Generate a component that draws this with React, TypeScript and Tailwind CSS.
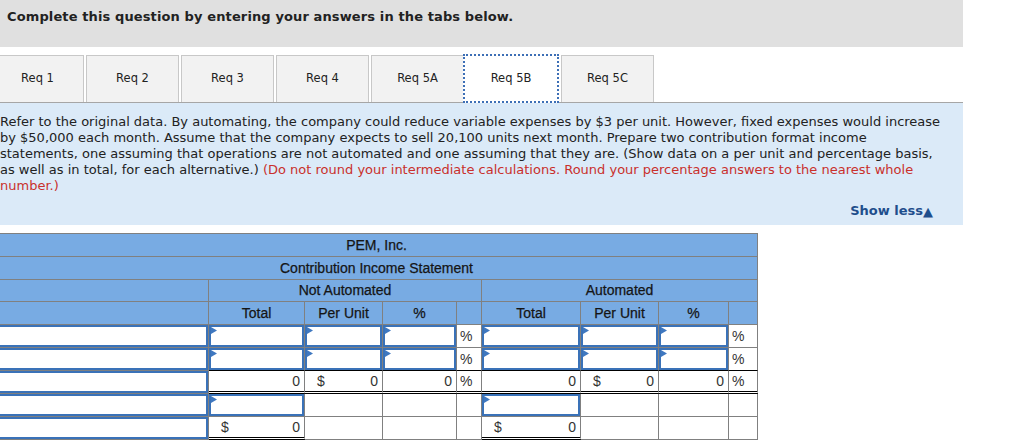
import React from 'react';

type Cell =
  | { t: 'label' }
  | { t: 'inp' }
  | { t: 'num'; v: string; dbl?: boolean }
  | { t: 'dollar'; v: string; dbl?: boolean }
  | { t: 'pct'; dbl?: boolean }
  | { t: 'empty' };

const W = ['w-[213px]', 'w-[96px]', 'w-[78px]', 'w-[74px]', 'w-[25px]', 'w-[99px]', 'w-[78px]', 'w-[70px]', 'w-[29px]'];

const Tri = () => (
  <svg width="6" height="7" viewBox="0 0 6 7" className="block">
    <polygon points="0,0 6,3.5 0,7" fill="#3f78c0" />
  </svg>
);

function renderCell(c: Cell, i: number, blackBottom: boolean) {
  const base = `${W[i]} h-full shrink-0 box-border border-r border-[#808080] ${
    'dbl' in c && c.dbl ? 'border-b-[3px] border-b-black border-double' : blackBottom && i > 0 ? 'border-b border-b-black' : 'border-b'
  }`;
  if (c.t === 'label') {
    return (
      <div key={i} className={base}>
        <div className="h-full box-border border-2 border-[#3a72b8] bg-white" />
      </div>
    );
  }
  if (c.t === 'inp') {
    return (
      <div key={i} className={base}>
        <div className="h-full box-border border-2 border-[#3a72b8] bg-white">
          <Tri />
        </div>
      </div>
    );
  }
  if (c.t === 'num') {
    return (
      <div key={i} className={`${base} flex items-center justify-end pr-[4px] text-[#333]`}>
        {c.v}
      </div>
    );
  }
  if (c.t === 'dollar') {
    return (
      <div key={i} className={`${base} flex items-center justify-between pl-[12px] pr-[4px] text-[#333]`}>
        <span>$</span>
        <span>{c.v}</span>
      </div>
    );
  }
  if (c.t === 'pct') {
    return (
      <div key={i} className={`${base} flex items-center pl-[3px] text-[#333]`}>
        %
      </div>
    );
  }
  return <div key={i} className={base} />;
}

const rowA: Cell[] = [
  { t: 'label' }, { t: 'inp' }, { t: 'inp' }, { t: 'inp' }, { t: 'pct' },
  { t: 'inp' }, { t: 'inp' }, { t: 'inp' }, { t: 'pct' },
];
const rowC: Cell[] = [
  { t: 'label' },
  { t: 'num', v: '0', dbl: true },
  { t: 'dollar', v: '0', dbl: true },
  { t: 'num', v: '0', dbl: true },
  { t: 'pct', dbl: true },
  { t: 'num', v: '0', dbl: true },
  { t: 'dollar', v: '0', dbl: true },
  { t: 'num', v: '0', dbl: true },
  { t: 'pct', dbl: true },
];
const rowD: Cell[] = [
  { t: 'label' }, { t: 'inp' }, { t: 'empty' }, { t: 'empty' }, { t: 'empty' },
  { t: 'inp' }, { t: 'empty' }, { t: 'empty' }, { t: 'empty' },
];
const rowE: Cell[] = [
  { t: 'label' }, { t: 'dollar', v: '0', dbl: true }, { t: 'empty' }, { t: 'empty' }, { t: 'empty' },
  { t: 'dollar', v: '0', dbl: true }, { t: 'empty' }, { t: 'empty' }, { t: 'empty' },
];

const tabs = ['Req 1', 'Req 2', 'Req 3', 'Req 4', 'Req 5A', 'Req 5B', 'Req 5C'];

export default function App() {
  const hdr = 'box-border border-r border-b border-[#808080] flex items-center justify-center shrink-0';
  return (
    <div className="w-[1015px] h-[442px] overflow-hidden bg-white font-['DejaVu_Sans',Verdana,sans-serif] text-[#222]">
      {/* Top banner */}
      <div className="w-[963px] h-[47px] bg-[#e0e0e0] pl-[7px] pt-[9px] text-[13px] leading-[16px] font-bold tracking-[0.12px] text-[#222]">
        Complete this question by entering your answers in the tabs below.
      </div>

      {/* Tabs */}
      <div className="mt-[8px] w-[963px] h-[48px] border-b border-[#a6a6a6] flex items-start">
        <div className="flex -ml-[9px]">
          {tabs.map((t, i) =>
            t === 'Req 5B' ? (
              <div
                key={t}
                className="w-[96px] h-[49px] -ml-[1px] -mt-[1px] box-border border-2 border-dotted border-[#3d6fb6] bg-white flex items-center justify-center text-[11.5px] text-[#222] relative z-10"
              >
                {t}
              </div>
            ) : (
              <div
                key={t}
                className={`w-[93px] h-[47px] box-border border border-[#c8c8c8] border-b-0 bg-[#f2f2f2] flex items-center justify-center text-[11.5px] text-[#222] ${
                  i === 0 ? '' : 'ml-[2px]'
                }`}
              >
                {t}
              </div>
            )
          )}
        </div>
      </div>

      {/* Description */}
      <div className="w-[963px] h-[122px] bg-[#dbeaf8] pt-[11px] text-[13px] leading-[16px] text-[#222]">
        <div className="whitespace-nowrap">
          Refer to the original data. By automating, the company could reduce variable expenses by $3 per unit. However, fixed expenses would increase
        </div>
        <div className="whitespace-nowrap">
          by $50,000 each month. Assume that the company expects to sell 20,100 units next month. Prepare two contribution format income
        </div>
        <div className="whitespace-nowrap">
          statements, one assuming that operations are not automated and one assuming that they are. (Show data on a per unit and percentage basis,
        </div>
        <div className="whitespace-nowrap">
          as well as in total, for each alternative.){' '}
          <span className="text-[#c9302c]">
            (Do not round your intermediate calculations. Round your percentage answers to the nearest whole
          </span>
        </div>
        <div className="whitespace-nowrap text-[#c9302c]">number.)</div>
        <div className="mt-[9px] flex justify-end pr-[30px]">
          <span className="font-bold text-[#1f4e8c] text-[13px] flex items-center">
            Show less<span className="text-[13px] leading-none">▲</span>
          </span>
        </div>
      </div>

      {/* Table */}
      <div className="mt-[8px] -ml-[4px] w-[762px] font-['Liberation_Sans',Arial,sans-serif] text-[14px]">
        <div className="bg-[#78abe3] border-t border-[#808080] text-[#151515] [-webkit-text-stroke:0.25px_#151515]">
          <div className="flex h-[23px]">
            <div className={`${hdr} w-[762px]`}>PEM, Inc.</div>
          </div>
          <div className="flex h-[23px]">
            <div className={`${hdr} w-[762px]`}>Contribution Income Statement</div>
          </div>
          <div className="flex h-[22px]">
            <div className={`${hdr} w-[213px]`} />
            <div className={`${hdr} w-[273px]`}>Not Automated</div>
            <div className={`${hdr} w-[276px]`}>Automated</div>
          </div>
          <div className="flex h-[23px]">
            <div className={`${hdr} w-[213px]`} />
            <div className={`${hdr} w-[96px]`}>Total</div>
            <div className={`${hdr} w-[78px]`}>Per Unit</div>
            <div className={`${hdr} w-[74px]`}>%</div>
            <div className={`${hdr} w-[25px]`} />
            <div className={`${hdr} w-[99px]`}>Total</div>
            <div className={`${hdr} w-[78px]`}>Per Unit</div>
            <div className={`${hdr} w-[70px]`}>%</div>
            <div className={`${hdr} w-[29px]`} />
          </div>
        </div>
        <div className="flex h-[23px]">{rowA.map((c, i) => renderCell(c, i, false))}</div>
        <div className="flex h-[23px]">{rowA.map((c, i) => renderCell(c, i, true))}</div>
        <div className="flex h-[23px]">{rowC.map((c, i) => renderCell(c, i, false))}</div>
        <div className="flex h-[23px]">{rowD.map((c, i) => renderCell(c, i, false))}</div>
        <div className="flex h-[23px]">{rowE.map((c, i) => renderCell(c, i, false))}</div>
      </div>
    </div>
  );
}
